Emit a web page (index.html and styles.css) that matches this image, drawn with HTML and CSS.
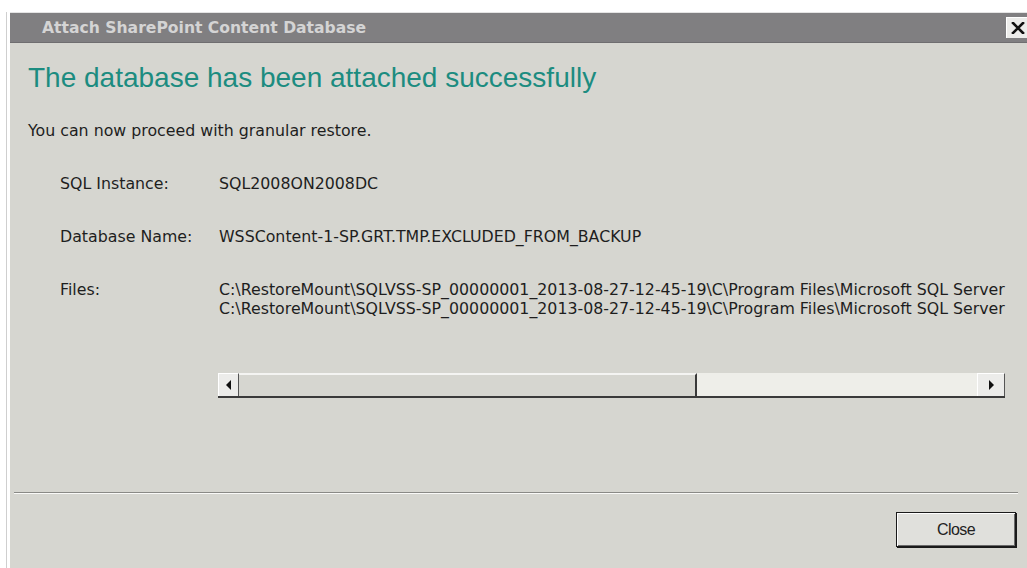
FILE: index.html
```html
<!DOCTYPE html>
<html>
<head>
<meta charset="utf-8">
<title>Attach SharePoint Content Database</title>
<link rel="stylesheet" href="styles.css">
</head>
<body>
<div class="desk">
  <div class="edge">
    <div class="dialog">
      <div class="titlebar">
        <span class="title">Attach SharePoint Content Database</span>
        <span class="close-x">
          <svg width="14" height="12" viewBox="0 0 14 12"><path d="M2 1 L12 11 M12 1 L2 11" stroke="#111" stroke-width="2.6" stroke-linecap="square"/></svg>
        </span>
      </div>
      <div class="content">
        <h1 class="heading">The database has been attached successfully</h1>
        <p class="intro">You can now proceed with granular restore.</p>
        <div class="details">
          <div class="label">SQL Instance:</div>
          <div class="value">SQL2008ON2008DC</div>
          <div class="label">Database Name:</div>
          <div class="value">WSSContent-1-SP.GRT.TMP.EXCLUDED_FROM_BACKUP</div>
          <div class="label">Files:</div>
          <div class="value files">
            <div class="file-list">
              <div>C:\RestoreMount\SQLVSS-SP_00000001_2013-08-27-12-45-19\C\Program Files\Microsoft SQL Server</div>
              <div>C:\RestoreMount\SQLVSS-SP_00000001_2013-08-27-12-45-19\C\Program Files\Microsoft SQL Server</div>
            </div>
            <div class="hscroll">
              <div class="arrow left"><span class="tri tri-left"></span></div>
              <div class="thumb"></div>
              <div class="track"></div>
              <div class="arrow right"><span class="tri tri-right"></span></div>
            </div>
          </div>
        </div>
      </div>
      <div class="separator"></div>
      <div class="footer">
        <button class="btn">Close</button>
      </div>
    </div>
  </div>
</div>
</body>
</html>
```
FILE: styles.css
```css
html, body {
  margin: 0;
  padding: 0;
  background: #ffffff;
}

body {
  font-family: "DejaVu Sans", "Liberation Sans", sans-serif;
  color: #1e1e1e;
  overflow: hidden;
}

.desk {
  padding: 12px 0 0 6px;
  height: 556px;
}

.edge {
  border-left: 1px solid #cfcfcf;
  padding-left: 3px;
  height: 100%;
}

.dialog {
  background: #d6d6d0;
  height: 100%;
  border-top: 1px solid #e4e4e4;
  display: flex;
  flex-direction: column;
}

.titlebar {
  height: 29px;
  background: #807f81;
  border-bottom: 1px solid #6f6e70;
  display: flex;
  align-items: center;
  justify-content: space-between;
  padding-left: 32px;
}

.title {
  font-family: "DejaVu Sans", sans-serif;
  font-weight: bold;
  font-size: 15.6px;
  color: #d4d4d4;
}

.close-x {
  width: 22px;
  height: 20px;
  background: #ececea;
  border-top: 1px solid #ffffff;
  border-left: 1px solid #ffffff;
  display: flex;
  align-items: center;
  justify-content: center;
  margin-right: -2px;
}

.content {
  padding: 0 0 0 18px;
}

.heading {
  margin: 18px 0 0 0;
  font-family: "Liberation Sans", sans-serif;
  font-weight: normal;
  font-size: 28px;
  line-height: 34px;
  color: #1c8c80;
}

.intro {
  margin: 26px 0 0 0;
  font-size: 15.8px;
  line-height: 19px;
}

.details {
  display: grid;
  grid-template-columns: 159px 1fr;
  row-gap: 34px;
  margin: 34px 0 0 32px;
  font-size: 15.8px;
  line-height: 19px;
}

.value {
  min-width: 0;
}

.files {
  margin-right: 22px;
}

.file-list {
  white-space: nowrap;
  line-height: 19px;
}

.hscroll {
  margin: 55px 0 0 -1px;
  height: 25px;
  display: flex;
  border-bottom: 2px solid #3a3a3a;
  box-sizing: border-box;
}

.arrow {
  width: 19px;
  background: #ececea;
  border-top: 1px solid #fff;
  border-left: 1px solid #fff;
  border-right: 1px solid #555;
  display: flex;
  align-items: center;
  justify-content: center;
}

.arrow.right {
  width: 26px;
}

.tri {
  width: 0;
  height: 0;
  border-top: 5px solid transparent;
  border-bottom: 5px solid transparent;
}

.tri-left {
  border-right: 5px solid #111;
}

.tri-right {
  border-left: 5px solid #111;
}

.thumb {
  width: 456px;
  background: #d6d6d0;
  border-top: 2px solid #f4f4f2;
  border-right: 2px solid #3a3a3a;
}

.track {
  flex: 1;
  background: #eeeee9;
}

.separator {
  margin: auto 9px 0 4px;
  height: 1px;
  background: #8a8a86;
  border-bottom: 1px solid #fafaf8;
}

.footer {
  display: flex;
  justify-content: flex-end;
  padding: 18px 11px 22px 0;
}

.btn {
  width: 120px;
  height: 35px;
  background: #e0e0dc;
  border: 1px solid #1a1a1a;
  box-shadow: inset 1px 1px 0 #ffffff, inset -1px -1px 0 #6a6a6a, 1px 1px 0 #1a1a1a;
  font-family: "Liberation Sans Narrow", "Liberation Sans", sans-serif;
  font-size: 16px;
  letter-spacing: -0.6px;
  color: #222;
  padding: 0;
}
```
